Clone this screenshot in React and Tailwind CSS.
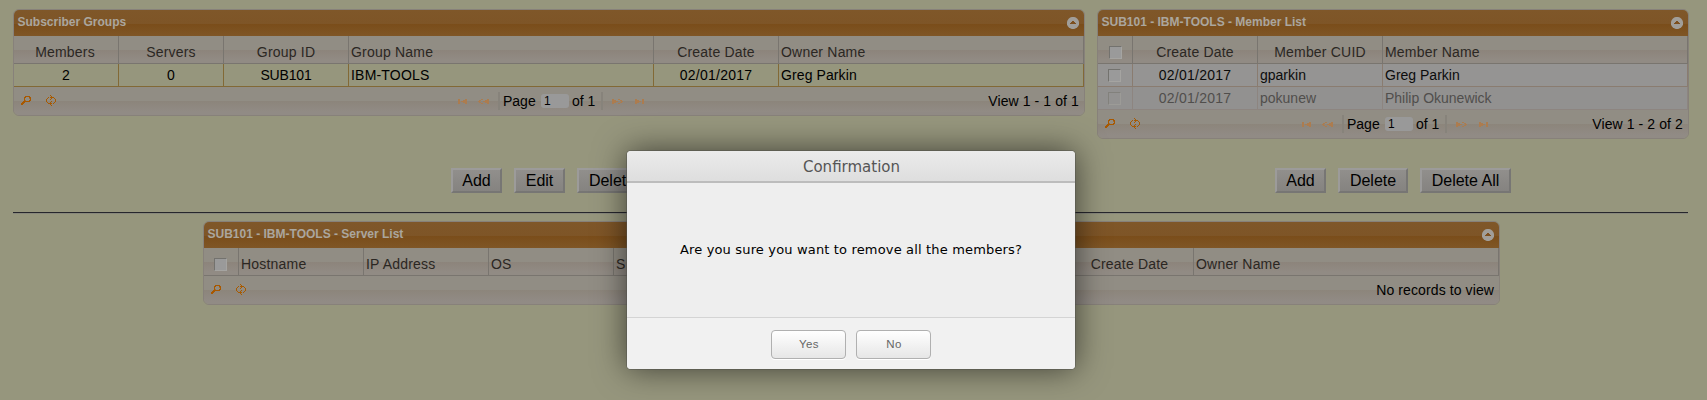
import React from 'react';

const helv = "font-['Liberation_Sans',Arial,sans-serif]";

function CollapseIcon() {
  return (
    <svg width="12" height="12" viewBox="0 0 12 12" className="block">
      <circle cx="6" cy="6" r="6.1" fill="#a19e99" />
      <path d="M3 7h6v-1h-1v-1h-1v-1h-2v1h-1v1h-1z" fill="#7d4f1e" shapeRendering="crispEdges" />
    </svg>
  );
}

function SearchIcon() {
  return (
    <svg width="10" height="10" viewBox="0 0 10 10" shapeRendering="crispEdges" className="block shrink-0">
      <path
        d="M4 0h5v1h-5zM3 1h2v1h-2zM8 1h2v1h-2zM3 1h1v4h-1zM9 1h1v4h-1zM8 4h1v2h-1zM3 5h6v1h-6zM2 5h3v1h-3zM1 6h3v1h-3zM0 7h3v1h-3zM0 8h2v1h-2z"
        fill="#a85800"
      />
      <path d="M4 4h1v1h-1zM8 2h1v1h-1z" fill="#a85800" fillOpacity="0.6" />
    </svg>
  );
}

function RefreshIcon() {
  return (
    <svg width="10" height="12" viewBox="0 0 10 12" shapeRendering="crispEdges" className="block shrink-0">
      <path
        d="M4 0h1v1h-1zM5 1h1v1h-1zM4 2h4v1h-4zM5 3h1v1h-1zM4 4h1v1h-1zM2 2h1v1h-1zM1 3h1v1h-1zM0 4h1v3h-1zM1 7h1v1h-1zM8 3h1v1h-1zM9 4h1v3h-1zM8 7h1v1h-1zM7 8h1v1h-1zM5 6h1v1h-1zM4 7h1v1h-1zM2 8h4v1h-4zM4 9h1v1h-1zM5 10h1v1h-1z"
        fill="#a85a00"
      />
    </svg>
  );
}

function EndArrow({ flip }) {
  return (
    <svg width="9" height="6" viewBox="0 0 9 6" shapeRendering="crispEdges" className={flip ? 'block shrink-0 -scale-x-100' : 'block shrink-0'}>
      <path d="M0 1h2v5h-2zM3 3h2v-1h2v-1h2v5h-2v-1h-2v-1h-2z" fill="#ac7c4f" />
    </svg>
  );
}

function StepArrow({ flip }) {
  return (
    <svg width="11" height="6" viewBox="0 0 11 6" shapeRendering="crispEdges" className={flip ? 'block shrink-0 -scale-x-100' : 'block shrink-0'}>
      <path d="M0 3h2v1h-2zM1 2h2v1h-2zM3 1h2v1h-2zM1 4h2v1h-2zM3 5h2v1h-2zM5 3h2v-1h2v-1h2v5h-2v-1h-2v-1h-2z" fill="#ac7c4f" />
    </svg>
  );
}

function Checkbox({ faded }) {
  return (
    <span
      className={
        'block h-[13px] w-[13px] border-t border-l border-r border-b ' +
        (faded
          ? 'border-t-[#82817c] border-l-[#82817c] border-r-[#9c9b97] border-b-[#9c9b97] bg-[#939291]'
          : 'border-t-[#73726e] border-l-[#73726e] border-r-[#a5a4a1] border-b-[#a5a4a1] bg-[#9a9a9a]')
      }
    />
  );
}

function Panel({ title, children, className }) {
  return (
    <section className={'overflow-hidden rounded-[6px] border border-[#87817a] ' + className}>
      <div className="flex h-[26px] items-center justify-between bg-[linear-gradient(#7f5729_0,#7e5527_14px,#7a4d1a_14px,#7f5626_26px)] pr-[5px] pl-[3.5px]">
        <h2 className="-mt-0.5 text-[12px] leading-4 font-bold whitespace-nowrap text-[#aba69e]">{title}</h2>
        <CollapseIcon />
      </div>
      {children}
    </section>
  );
}

function HeadCell({ className, children }) {
  return (
    <div className={'flex h-full items-center border-r border-[#79756f] pt-[5px] tracking-[0.2px] text-[#2b2723] ' + className}>
      {children}
    </div>
  );
}

function HeadRow({ children }) {
  return (
    <div className="flex h-7 border-b border-[#79756f] bg-[linear-gradient(#918d84_0,#918d84_14px,#8c847b_14px,#918b84_24px)] text-[14px] whitespace-nowrap">
      {children}
    </div>
  );
}

function Pager({ pages, summary }) {
  return (
    <div className="flex h-7 items-center bg-[linear-gradient(#918d84_0,#918d84_14px,#8c857b_14px,#918b85_25px)] text-[14px] whitespace-nowrap text-black">
      <div className="flex flex-1 items-center gap-[15px] pl-[7px]">
        <SearchIcon />
        <RefreshIcon />
      </div>
      {pages && (
        <div className="flex w-[188px] shrink-0 items-center pl-0.5">
          <EndArrow />
          <span className="ml-[11px]"><StepArrow /></span>
          <span className="ml-[9px] h-[18px] w-0.5 bg-[#87837b]" />
          <span className="ml-[3px] w-[37px] shrink-0">Page</span>
          <span className="ml-[1px] h-[14px] w-[28px] rounded-[3px] bg-[#999999] pl-[3px] text-[12px] leading-[14px]">1</span>
          <span className="ml-[3px] w-[29px] shrink-0">of 1</span>
          <span className="h-[18px] w-0.5 bg-[#87837b]" />
          <span className="ml-[9px]"><StepArrow flip /></span>
          <span className="ml-[12px]"><EndArrow flip /></span>
        </div>
      )}
      <div className="flex-1 pr-[5px] text-right tracking-[0.1px]">{summary}</div>
    </div>
  );
}

function MemberRow({ date, cuid, name, faded }) {
  const line = faded ? 'border-[#8d8580]' : 'border-[#8a7c70]';
  return (
    <div
      className={
        'flex h-[23px] items-center border-b text-[14px] whitespace-nowrap ' +
        (faded ? 'bg-[#929190] text-[#504e4c] ' : 'bg-[#959493] text-[#0c0c0c] ') +
        line
      }
    >
      <div className={'flex h-full w-[35px] items-center border-r pl-[10px] ' + line}>
        <Checkbox faded={faded} />
      </div>
      <div className={'flex h-full w-[125px] items-center justify-center border-r tracking-[0.25px] ' + line}>{date}</div>
      <div className={'flex h-full w-[125px] items-center border-r pl-0.5 ' + line}>{cuid}</div>
      <div className={'flex h-full w-[305px] items-center border-r pl-0.5 ' + line}>{name}</div>
    </div>
  );
}

function PushButton({ className, children }) {
  return (
    <button
      className={
        'h-[25px] border-2 border-t-[#9c9b9a] border-r-[#777674] border-b-[#777674] border-l-[#9c9b9a] bg-linear-to-b from-[#918f8c] to-[#858380] text-[16px] leading-[20px] whitespace-nowrap text-black ' +
        className
      }
    >
      {children}
    </button>
  );
}

function DialogButton({ children }) {
  return (
    <button className="h-[29px] w-[75px] rounded-[4px] border border-[#b0b0b0] bg-linear-to-b from-white to-[#e6e6e6] pl-px text-[11.5px] tracking-[0.4px] text-[#666] shadow-[0_1px_0_#fff]">
      {children}
    </button>
  );
}

export default function App() {
  const cell = 'flex h-full items-center border-r border-[#826936] ';
  return (
    <div className={'relative h-[400px] w-[1707px] overflow-hidden bg-[#96967d] px-[13px] pt-[9px] ' + helv}>
      <div className="flex h-[184px] gap-3">
        <div className="flex w-[1072px] flex-col">
          <Panel title="Subscriber Groups">
            <HeadRow>
              <HeadCell className="w-[105px] justify-center pr-[2px]">Members</HeadCell>
              <HeadCell className="w-[105px] justify-center">Servers</HeadCell>
              <HeadCell className="w-[125px] justify-center">Group ID</HeadCell>
              <HeadCell className="w-[305px] pl-0.5">Group Name</HeadCell>
              <HeadCell className="w-[125px] justify-center">Create Date</HeadCell>
              <HeadCell className="w-[305px] pl-0.5">Owner Name</HeadCell>
            </HeadRow>
            <div className="flex h-[23px] border-b border-[#826936] bg-[#96967d] text-[14px] whitespace-nowrap text-black">
              <div className={cell + 'w-[105px] justify-center'}>2</div>
              <div className={cell + 'w-[105px] justify-center'}>0</div>
              <div className={cell + 'w-[125px] justify-center tracking-[-0.15px]'}>SUB101</div>
              <div className={cell + 'w-[305px] pl-0.5 tracking-[0.2px]'}>IBM-TOOLS</div>
              <div className={cell + 'w-[125px] justify-center tracking-[0.25px]'}>02/01/2017</div>
              <div className={cell + 'w-[305px] pl-0.5 tracking-[0.1px]'}>Greg Parkin</div>
            </div>
            <Pager pages summary="View 1 - 1 of 1" />
          </Panel>
          <div className="mt-auto flex justify-center gap-3">
            <PushButton className="w-[51px]">Add</PushButton>
            <PushButton className="w-[51px]">Edit</PushButton>
            <PushButton className="w-[70px]">Delete</PushButton>
          </div>
        </div>
        <div className="flex w-[592px] flex-col">
          <Panel title="SUB101 - IBM-TOOLS - Member List">
            <HeadRow>
              <HeadCell className="w-[35px] pl-[11px]"><Checkbox /></HeadCell>
              <HeadCell className="w-[125px] justify-center">Create Date</HeadCell>
              <HeadCell className="w-[125px] justify-center">Member CUID</HeadCell>
              <HeadCell className="w-[305px] pl-0.5">Member Name</HeadCell>
            </HeadRow>
            <MemberRow date="02/01/2017" cuid="gparkin" name="Greg Parkin" />
            <MemberRow date="02/01/2017" cuid="pokunew" name="Philip Okunewick" faded />
            <Pager pages summary="View 1 - 2 of 2" />
          </Panel>
          <div className="mt-auto flex justify-center gap-3">
            <PushButton className="w-[51px]">Add</PushButton>
            <PushButton className="w-[70px]">Delete</PushButton>
            <PushButton className="w-[91px]">Delete All</PushButton>
          </div>
        </div>
      </div>

      <div className="mt-[19px] h-0.5 w-[1675px] border-t border-b border-t-[#26262c] border-b-[#88887c]" />

      <Panel title="SUB101 - IBM-TOOLS - Server List" className="mt-[7px] ml-[190px] w-[1297px]">
        <HeadRow>
          <HeadCell className="w-[35px] pl-[10px]"><Checkbox /></HeadCell>
          <HeadCell className="w-[125px] pl-0.5">Hostname</HeadCell>
          <HeadCell className="w-[125px] pl-0.5">IP Address</HeadCell>
          <HeadCell className="w-[125px] pl-0.5">OS</HeadCell>
          <HeadCell className="w-[455px] pl-0.5">S</HeadCell>
          <HeadCell className="w-[125px] justify-center pr-[3px]">Create Date</HeadCell>
          <HeadCell className="w-[305px] pl-0.5">Owner Name</HeadCell>
        </HeadRow>
        <Pager summary="No records to view" />
      </Panel>

      <div
        role="dialog"
        className="absolute top-[151px] left-[627px] flex h-[218px] w-[448px] flex-col overflow-hidden rounded-[4px] bg-[#eee] shadow-[0_0_0_1px_rgba(80,80,75,0.45),0_0_32px_rgba(0,0,0,0.6)]"
      >
        <div className="flex h-8 items-center justify-center border-b-2 border-[#bcbcbc] bg-linear-to-b from-[#ebebeb] to-[#dedede] pt-[3px] pl-px font-['DejaVu_Sans',sans-serif] text-[15px] text-[#555]">
          Confirmation
        </div>
        <div className="flex flex-1 items-center justify-center font-['DejaVu_Sans',sans-serif] text-[13px] tracking-[0.16px] text-black">
          Are you sure you want to remove all the members?
        </div>
        <div className="flex h-[52px] items-start justify-center gap-[10px] border-t border-[#d4d4d4] bg-[#f1f1f1] pt-3">
          <DialogButton>Yes</DialogButton>
          <DialogButton>No</DialogButton>
        </div>
      </div>
    </div>
  );
}
